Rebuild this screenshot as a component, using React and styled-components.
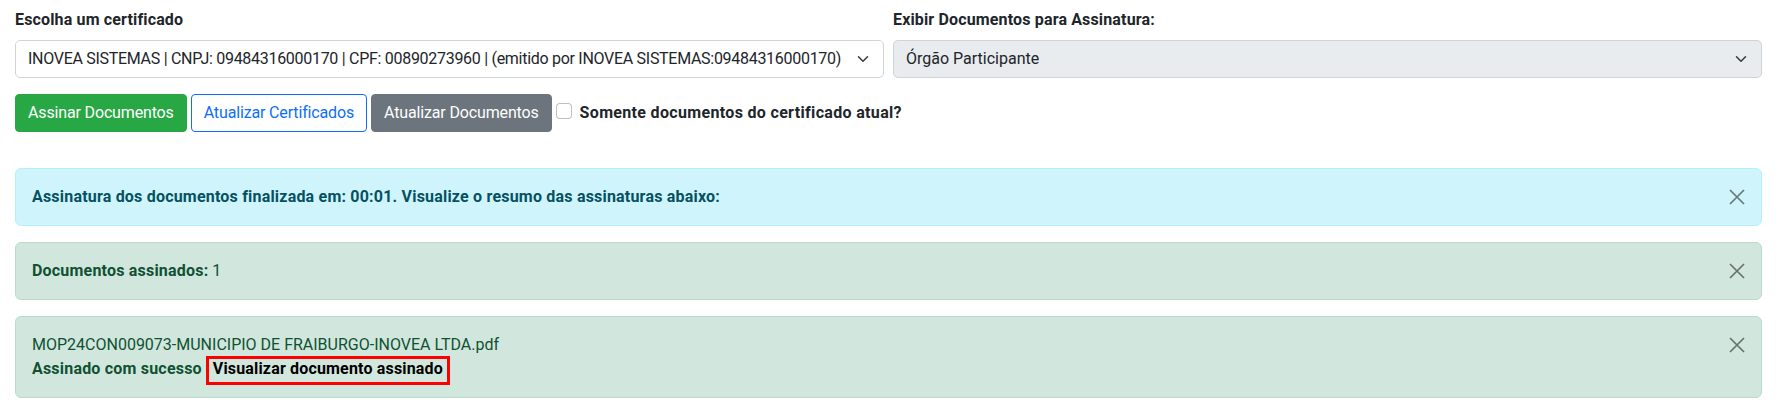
import React from 'react';
import styled, { createGlobalStyle, css } from 'styled-components';

const GlobalStyle = createGlobalStyle`
  *, *::before, *::after { box-sizing: border-box; }
  html, body { margin: 0; padding: 0; background: #fff; }
  body {
    font-family: Roboto, "Noto Sans", sans-serif;
    font-size: 16px;
    line-height: 1.5;
    color: #212529;
  }
`;

const Page = styled.div`
  padding: 8px 14px 0 15px;
`;

const TopGrid = styled.div`
  display: grid;
  grid-template-columns: 1fr 1fr;
  column-gap: 9px;
`;

const Field = styled.div`
  display: flex;
  flex-direction: column;
  min-width: 0;
`;

const Label = styled.div`
  font-weight: 700;
  line-height: 24px;
  letter-spacing: 0.15px;
  margin-bottom: 8px;
`;

const SelectBox = styled.div`
  display: flex;
  align-items: center;
  height: 38px;
  padding: 0 12px;
  border: 1px solid #ced4da;
  border-radius: 5px;
  background: ${(p) => (p.$disabled ? '#e9ecef' : '#fff')};
`;

const SelectText = styled.span`
  flex: 1;
  min-width: 0;
  overflow: hidden;
  white-space: nowrap;
  line-height: 24px;
  letter-spacing: ${(p) => (p.$tight ? '-0.29px' : '0')};
`;

const Chevron = styled.svg`
  flex: none;
  width: 16px;
  height: 12px;
  margin-left: 8px;
`;

const Actions = styled.div`
  display: flex;
  align-items: center;
  gap: 4px;
  margin-top: 16px;
`;

const variants = {
  success: css`
    background: #28a745;
    border-color: #28a745;
    color: #fff;
  `,
  outline: css`
    background: #fff;
    border-color: #0d6efd;
    color: #0d6efd;
  `,
  secondary: css`
    background: #6c757d;
    border-color: #6c757d;
    color: #fff;
  `,
};

const Button = styled.button`
  display: inline-flex;
  align-items: center;
  height: 38px;
  padding: 0 12px;
  border: 1px solid transparent;
  border-radius: 4px;
  font-family: inherit;
  font-size: 16px;
  line-height: 24px;
  letter-spacing: -0.15px;
  cursor: pointer;
  ${(p) => variants[p.$variant]}
`;

const CheckGroup = styled.label`
  display: flex;
  align-items: flex-start;
  gap: 8px;
  line-height: 24px;
`;

const CheckBox = styled.span`
  flex: none;
  width: 16px;
  height: 16px;
  margin-top: 2px;
  border: 1px solid rgba(0, 0, 0, 0.25);
  border-radius: 4px;
  background: #fff;
`;

const CheckLabel = styled.span`
  font-weight: 700;
  letter-spacing: 0.33px;
  color: #212529;
`;

const Alerts = styled.div`
  display: flex;
  flex-direction: column;
  gap: 16px;
  margin-top: 36px;
`;

const alertTones = {
  info: css`
    background: #cff4fc;
    border-color: #b6effb;
    color: #055160;
  `,
  success: css`
    background: #d1e7dd;
    border-color: #badbcc;
    color: #0f5132;
  `,
};

const Alert = styled.div`
  display: flex;
  align-items: flex-start;
  padding: 16px;
  border: 1px solid transparent;
  border-radius: 6px;
  line-height: 24px;
  ${(p) => alertTones[p.$tone]}
`;

const AlertBody = styled.div`
  flex: 1;
  min-width: 0;
`;

const Strong = styled.strong`
  font-weight: 700;
  letter-spacing: 0.2px;
`;

const Highlight = styled.span`
  font-weight: 700;
  letter-spacing: 0.17px;
  color: #000;
  border: 3px solid #ff0000;
  padding: 0 4px 4px;
`;

const CloseButton = styled.button`
  flex: none;
  display: flex;
  width: 16px;
  height: 16px;
  margin-top: 4px;
  padding: 0;
  border: 0;
  background: transparent;
  opacity: 0.5;
  cursor: pointer;
`;

const CloseIcon = () => (
  <svg width="16" height="16" viewBox="0 0 16 16" aria-hidden="true">
    <path d="M1 1 15 15M15 1 1 15" stroke="#000" strokeWidth="1.7" fill="none" />
  </svg>
);

const ChevronIcon = () => (
  <Chevron viewBox="0 0 16 16" aria-hidden="true">
    <path d="m2 5 6 6 6-6" fill="none" stroke="#343a40" strokeWidth="2" strokeLinecap="round" strokeLinejoin="round" />
  </Chevron>
);

export default function App() {
  return (
    <>
      <GlobalStyle />
      <Page>
        <TopGrid>
          <Field>
            <Label>Escolha um certificado</Label>
            <SelectBox>
              <SelectText $tight>
                INOVEA SISTEMAS | CNPJ: 09484316000170 | CPF: 00890273960 | (emitido por INOVEA SISTEMAS:09484316000170)
              </SelectText>
              <ChevronIcon />
            </SelectBox>
          </Field>
          <Field>
            <Label>Exibir Documentos para Assinatura:</Label>
            <SelectBox $disabled>
              <SelectText>Órgão Participante</SelectText>
              <ChevronIcon />
            </SelectBox>
          </Field>
        </TopGrid>

        <Actions>
          <Button $variant="success">Assinar Documentos</Button>
          <Button $variant="outline">Atualizar Certificados</Button>
          <Button $variant="secondary">Atualizar Documentos</Button>
          <CheckGroup>
            <CheckBox />
            <CheckLabel>Somente documentos do certificado atual?</CheckLabel>
          </CheckGroup>
        </Actions>

        <Alerts>
          <Alert $tone="info">
            <AlertBody>
              <Strong>
                Assinatura dos documentos finalizada em: 00:01. Visualize o resumo das assinaturas abaixo:
              </Strong>
            </AlertBody>
            <CloseButton aria-label="Fechar"><CloseIcon /></CloseButton>
          </Alert>
          <Alert $tone="success">
            <AlertBody>
              <Strong>Documentos assinados:</Strong> 1
            </AlertBody>
            <CloseButton aria-label="Fechar"><CloseIcon /></CloseButton>
          </Alert>
          <Alert $tone="success">
            <AlertBody>
              <div>MOP24CON009073-MUNICIPIO DE FRAIBURGO-INOVEA LTDA.pdf</div>
              <div>
                <Strong>Assinado com sucesso</Strong> <Highlight>Visualizar documento assinado</Highlight>
              </div>
            </AlertBody>
            <CloseButton aria-label="Fechar"><CloseIcon /></CloseButton>
          </Alert>
        </Alerts>
      </Page>
    </>
  );
}
